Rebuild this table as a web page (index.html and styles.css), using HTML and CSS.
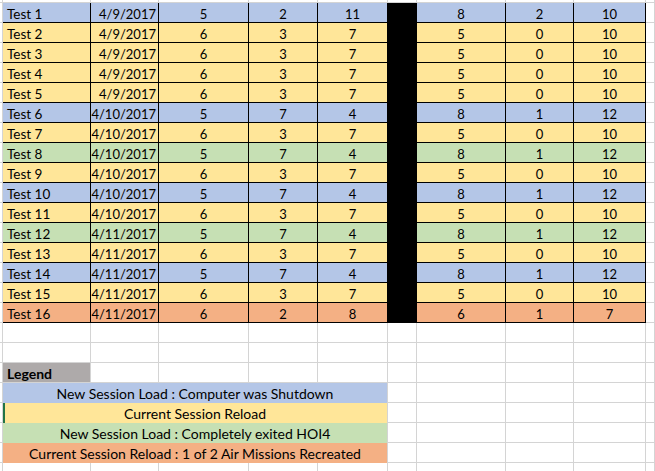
FILE: index.html
```html
<!DOCTYPE html>
<html>
<head>
<meta charset="utf-8">
<link rel="stylesheet" href="styles.css">
</head>
<body>
<div class="sheet">
  <div class="row top"><span class="g"></span><span class="g"></span><span class="g"></span><span class="g"></span><span class="g"></span><span class="g"></span><span class="g"></span><span class="g"></span><span class="g"></span><span class="g"></span><span class="g"></span></div>

  <div class="row blue"><span class="g"></span><span class="c l">Test 1</span><span class="c r">4/9/2017</span><span class="c">5</span><span class="c">2</span><span class="c">11</span><span class="blk"></span><span class="c">8</span><span class="c">2</span><span class="c">10</span><span class="g"></span></div>
  <div class="row yellow"><span class="g"></span><span class="c l">Test 2</span><span class="c r">4/9/2017</span><span class="c">6</span><span class="c">3</span><span class="c">7</span><span class="blk"></span><span class="c">5</span><span class="c">0</span><span class="c">10</span><span class="g"></span></div>
  <div class="row yellow"><span class="g"></span><span class="c l">Test 3</span><span class="c r">4/9/2017</span><span class="c">6</span><span class="c">3</span><span class="c">7</span><span class="blk"></span><span class="c">5</span><span class="c">0</span><span class="c">10</span><span class="g"></span></div>
  <div class="row yellow"><span class="g"></span><span class="c l">Test 4</span><span class="c r">4/9/2017</span><span class="c">6</span><span class="c">3</span><span class="c">7</span><span class="blk"></span><span class="c">5</span><span class="c">0</span><span class="c">10</span><span class="g"></span></div>
  <div class="row yellow"><span class="g"></span><span class="c l">Test 5</span><span class="c r">4/9/2017</span><span class="c">6</span><span class="c">3</span><span class="c">7</span><span class="blk"></span><span class="c">5</span><span class="c">0</span><span class="c">10</span><span class="g"></span></div>
  <div class="row blue"><span class="g"></span><span class="c l">Test 6</span><span class="c r">4/10/2017</span><span class="c">5</span><span class="c">7</span><span class="c">4</span><span class="blk"></span><span class="c">8</span><span class="c">1</span><span class="c">12</span><span class="g"></span></div>
  <div class="row yellow"><span class="g"></span><span class="c l">Test 7</span><span class="c r">4/10/2017</span><span class="c">6</span><span class="c">3</span><span class="c">7</span><span class="blk"></span><span class="c">5</span><span class="c">0</span><span class="c">10</span><span class="g"></span></div>
  <div class="row green"><span class="g"></span><span class="c l">Test 8</span><span class="c r">4/10/2017</span><span class="c">5</span><span class="c">7</span><span class="c">4</span><span class="blk"></span><span class="c">8</span><span class="c">1</span><span class="c">12</span><span class="g"></span></div>
  <div class="row yellow"><span class="g"></span><span class="c l">Test 9</span><span class="c r">4/10/2017</span><span class="c">6</span><span class="c">3</span><span class="c">7</span><span class="blk"></span><span class="c">5</span><span class="c">0</span><span class="c">10</span><span class="g"></span></div>
  <div class="row blue"><span class="g"></span><span class="c l">Test 10</span><span class="c r">4/10/2017</span><span class="c">5</span><span class="c">7</span><span class="c">4</span><span class="blk"></span><span class="c">8</span><span class="c">1</span><span class="c">12</span><span class="g"></span></div>
  <div class="row yellow"><span class="g"></span><span class="c l">Test 11</span><span class="c r">4/10/2017</span><span class="c">6</span><span class="c">3</span><span class="c">7</span><span class="blk"></span><span class="c">5</span><span class="c">0</span><span class="c">10</span><span class="g"></span></div>
  <div class="row green"><span class="g"></span><span class="c l">Test 12</span><span class="c r">4/11/2017</span><span class="c">5</span><span class="c">7</span><span class="c">4</span><span class="blk"></span><span class="c">8</span><span class="c">1</span><span class="c">12</span><span class="g"></span></div>
  <div class="row yellow"><span class="g"></span><span class="c l">Test 13</span><span class="c r">4/11/2017</span><span class="c">6</span><span class="c">3</span><span class="c">7</span><span class="blk"></span><span class="c">5</span><span class="c">0</span><span class="c">10</span><span class="g"></span></div>
  <div class="row blue"><span class="g"></span><span class="c l">Test 14</span><span class="c r">4/11/2017</span><span class="c">5</span><span class="c">7</span><span class="c">4</span><span class="blk"></span><span class="c">8</span><span class="c">1</span><span class="c">12</span><span class="g"></span></div>
  <div class="row yellow"><span class="g"></span><span class="c l">Test 15</span><span class="c r">4/11/2017</span><span class="c">6</span><span class="c">3</span><span class="c">7</span><span class="blk"></span><span class="c">5</span><span class="c">0</span><span class="c">10</span><span class="g"></span></div>
  <div class="row orange"><span class="g"></span><span class="c l">Test 16</span><span class="c r">4/11/2017</span><span class="c">6</span><span class="c">2</span><span class="c">8</span><span class="blk"></span><span class="c">6</span><span class="c">1</span><span class="c">7</span><span class="g"></span></div>

  <div class="row"><span class="g"></span><span class="g"></span><span class="g"></span><span class="g"></span><span class="g"></span><span class="g"></span><span class="g"></span><span class="g"></span><span class="g"></span><span class="g"></span><span class="g"></span></div>
  <div class="row"><span class="g"></span><span class="g"></span><span class="g"></span><span class="g"></span><span class="g"></span><span class="g"></span><span class="g"></span><span class="g"></span><span class="g"></span><span class="g"></span><span class="g"></span></div>

  <div class="row"><span class="g"></span><span class="g legend-head">Legend</span><span class="g"></span><span class="g"></span><span class="g"></span><span class="g"></span><span class="g"></span><span class="g"></span><span class="g"></span><span class="g"></span><span class="g"></span></div>
  <div class="row"><span class="g"></span><span class="key blue">New Session Load : Computer was Shutdown</span><span class="g"></span><span class="g"></span><span class="g"></span><span class="g"></span><span class="g"></span></div>
  <div class="row"><span class="g"></span><span class="key yellow active">Current Session Reload</span><span class="g"></span><span class="g"></span><span class="g"></span><span class="g"></span><span class="g"></span></div>
  <div class="row"><span class="g"></span><span class="key green">New Session Load : Completely exited HOI4</span><span class="g"></span><span class="g"></span><span class="g"></span><span class="g"></span><span class="g"></span></div>
  <div class="row"><span class="g"></span><span class="key orange">Current Session Reload : 1 of 2 Air Missions Recreated</span><span class="g"></span><span class="g"></span><span class="g"></span><span class="g"></span><span class="g"></span></div>
  <div class="row"><span class="g"></span><span class="g"></span><span class="g"></span><span class="g"></span><span class="g"></span><span class="g"></span><span class="g"></span><span class="g"></span><span class="g"></span><span class="g"></span><span class="g"></span></div>
</div>
</body>
</html>
```

FILE: styles.css
```css
* { box-sizing: border-box; }
html, body { margin: 0; padding: 0; background: #fff; }
body {
  font-family: Lato, "Liberation Sans", sans-serif;
  font-size: 13px;
  color: #000;
  width: 655px;
  height: 471px;
  overflow: hidden;
}
.sheet { display: flex; flex-direction: column; }
.row {
  display: grid;
  grid-template-columns: 3px 88px 68px 90px 69px 70px 29px 89px 68px 72px 9px;
  height: 20px;
}
.row.top { height: 3px; }
.row > span {
  display: block;
  line-height: 18px;
  padding-top: 2px;
  white-space: nowrap;
  overflow: hidden;
}
.g {
  border-right: 1px solid #d4d4d4;
  border-bottom: 1px solid #d4d4d4;
  background: #fff;
}
.c {
  border-right: 1px solid #000;
  border-bottom: 1px solid #000;
  text-align: center;
}
.c.l { text-align: left; padding-left: 4px; font-size: 13.5px; }
.c.r { text-align: right; padding-right: 2px; }
.blk { background: #000; }
.blue { background: #b4c6e7; }
.yellow { background: #ffe699; }
.green { background: #c6e0b4; }
.orange { background: #f4b084; }
.row.blue, .row.yellow, .row.green, .row.orange { background: #fff; }
.row.blue .c { background: #b4c6e7; }
.row.yellow .c { background: #ffe699; }
.row.green .c { background: #c6e0b4; }
.row.orange .c { background: #f4b084; }
.legend-head {
  background: #aeaaaa;
  font-weight: bold;
  font-size: 14px;
  padding-left: 4px;
}
.key {
  grid-column: span 5;
  text-align: center;
  font-size: 14px;
  border-right: 1px solid #d4d4d4;
}
.key.active { box-shadow: inset 2px 0 0 #217346; }
```
